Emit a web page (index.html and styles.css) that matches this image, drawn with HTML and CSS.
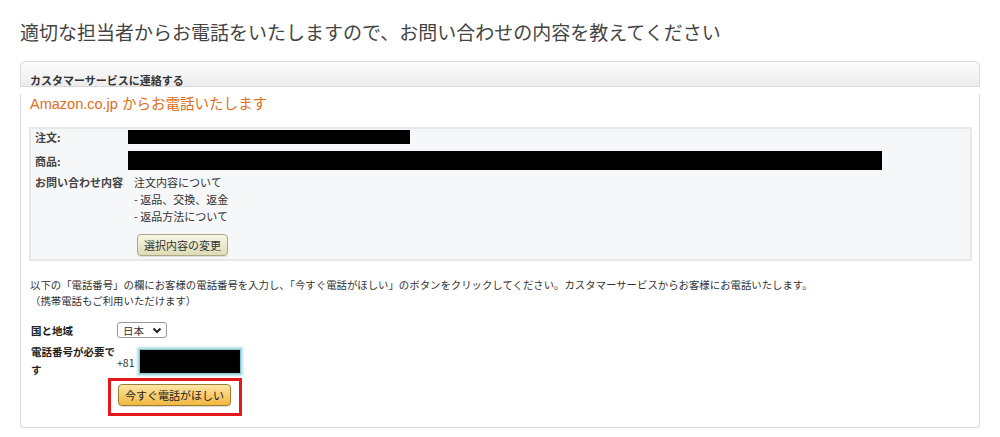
FILE: index.html
```
<!DOCTYPE html>
<html lang="ja">
<head>
    <meta charset="UTF-8">
    <title>カスタマーサービスに連絡する</title>
    <link rel="stylesheet" href="styles.css">
</head>
<body>
    <h1 class="page-title">適切な担当者からお電話をいたしますので、お問い合わせの内容を教えてください</h1>

    <div class="panel">
        <div class="panel-head">カスタマーサービスに連絡する</div>
        <div class="panel-body">
            <h2 class="call-title">Amazon.co.jp からお電話いたします</h2>

            <div class="summary">
                <div class="summary-row row-order">
                    <span class="summary-label">注文:</span>
                    <span class="redact redact-order"></span>
                </div>
                <div class="summary-row row-item">
                    <span class="summary-label">商品:</span>
                    <span class="redact redact-item"></span>
                </div>
                <div class="summary-row row-topic">
                    <span class="summary-label">お問い合わせ内容</span>
                    <div class="topic-lines">
                        <div>注文内容について</div>
                        <div>- 返品、交換、返金</div>
                        <div>- 返品方法について</div>
                    </div>
                </div>
                <button class="btn-change">選択内容の変更</button>
            </div>

            <p class="note">以下の「電話番号」の欄にお客様の電話番号を入力し、「今すぐ電話がほしい」のボタンをクリックしてください。カスタマーサービスからお客様にお電話いたします。<br>（携帯電話もご利用いただけます）</p>

            <div class="form-row row-country">
                <label class="form-label">国と地域</label>
                <div class="select">
                    <span>日本</span>
                    <svg width="10" height="7" viewBox="0 0 10 7"><path d="M1.5 1.5 L5 5 L8.5 1.5" fill="none" stroke="#222" stroke-width="2"/></svg>
                </div>
            </div>

            <div class="form-row row-phone">
                <label class="form-label">電話番号が必要です</label>
                <span class="prefix">+81</span>
                <span class="phone-input"></span>
            </div>

            <div class="highlight">
                <button class="btn-call">今すぐ電話がほしい</button>
            </div>
        </div>
    </div>
</body>
</html>
```

FILE: styles.css
```
body {
    margin: 0;
    padding: 20px 20px 0 20px;
    font-family: "Noto Sans CJK JP", "Liberation Sans", sans-serif;
    color: #333;
    background: #fff;
}
.page-title {
    margin: 0 0 17px 0;
    font-size: 19px;
    line-height: 24px;
    font-weight: normal;
    color: #444;
}
.panel {
    width: 960px;
}
.panel-head {
    height: 26px;
    box-sizing: border-box;
    padding: 11px 0 0 9px;
    font-size: 11px;
    line-height: 14px;
    font-weight: bold;
    color: #333;
    border: 1px solid #dadada;
    border-radius: 5px 5px 0 0;
    background: linear-gradient(#fdfdfd, #ececec);
}
.panel-body {
    border: 1px solid #dadada;
    border-top: none;
    border-radius: 0 0 4px 4px;
    padding: 0 7px 11px 8px;
}
.call-title {
    margin: 7px 0 0 1px;
    font-size: 14.5px;
    line-height: 20px;
    font-weight: normal;
    color: #dd6f22;
    font-family: "Liberation Sans", "Noto Sans CJK JP", sans-serif;
}
.summary {
    margin-top: 13px;
    background: #f5f7f9;
    border: 2px solid #e8e8e8;
    padding: 0 0 3px 4px;
}
.summary-row {
    display: grid;
    grid-template-columns: 93px 1fr;
    align-items: center;
    font-size: 11px;
}
.summary-label {
    font-weight: bold;
    color: #444;
}
.redact {
    display: block;
    background: #000;
}
.redact-order {
    width: 282px;
    height: 14px;
}
.row-item {
    margin-top: 6px;
}
.redact-item {
    width: 754px;
    height: 19px;
}
.row-topic {
    margin-top: 4px;
    align-items: start;
    line-height: 17px;
}
.topic-lines {
    padding-left: 6px;
    color: #333;
}
.btn-change {
    margin: 9px 0 0 102px;
    height: 22px;
    padding: 0 6px;
    font-family: inherit;
    font-size: 11px;
    color: #333;
    border: 1px solid #aaa78a;
    border-radius: 4px;
    background: linear-gradient(#f8f7e6, #dedbb6);
    box-shadow: 0 1px 1px rgba(0, 0, 0, 0.1);
}
.note {
    margin: 16px 0 0 1px;
    font-size: 10.4px;
    line-height: 16px;
    color: #333;
}
.form-row {
    display: flex;
    align-items: center;
    padding-left: 2px;
    font-size: 10.5px;
}
.form-label {
    width: 86px;
    flex: none;
    font-weight: bold;
    color: #222;
}
.row-country {
    margin-top: 13px;
}
.select {
    display: flex;
    align-items: center;
    justify-content: space-between;
    width: 50px;
    height: 16px;
    box-sizing: border-box;
    padding: 0 4px 0 5px;
    border: 1px solid #999;
    border-radius: 3px;
    background: #fff;
    font-size: 10.5px;
}
.row-phone {
    margin-top: 5px;
}
.row-phone .form-label {
    line-height: 18px;
}
.prefix {
    font-size: 10.5px;
    color: #333;
    padding-top: 2px;
}
.phone-input {
    display: block;
    width: 100px;
    height: 23px;
    margin-left: 5px;
    background: #000;
    border: 1px solid #7fc3cb;
    box-shadow: 0 0 2px 2px #b3e2e8;
}
.highlight {
    width: 134px;
    box-sizing: border-box;
    margin: -1px 0 0 79px;
    padding: 3px 0 7px 7px;
    border: 3px solid #e3191b;
}
.btn-call {
    display: block;
    width: 113px;
    height: 22px;
    font-family: inherit;
    font-size: 11px;
    color: #222;
    border: 1px solid #9c7e31;
    border-radius: 4px;
    background: linear-gradient(#fde6a4, #f2b740);
    box-shadow: 0 1px 1px rgba(0, 0, 0, 0.15);
}
```
